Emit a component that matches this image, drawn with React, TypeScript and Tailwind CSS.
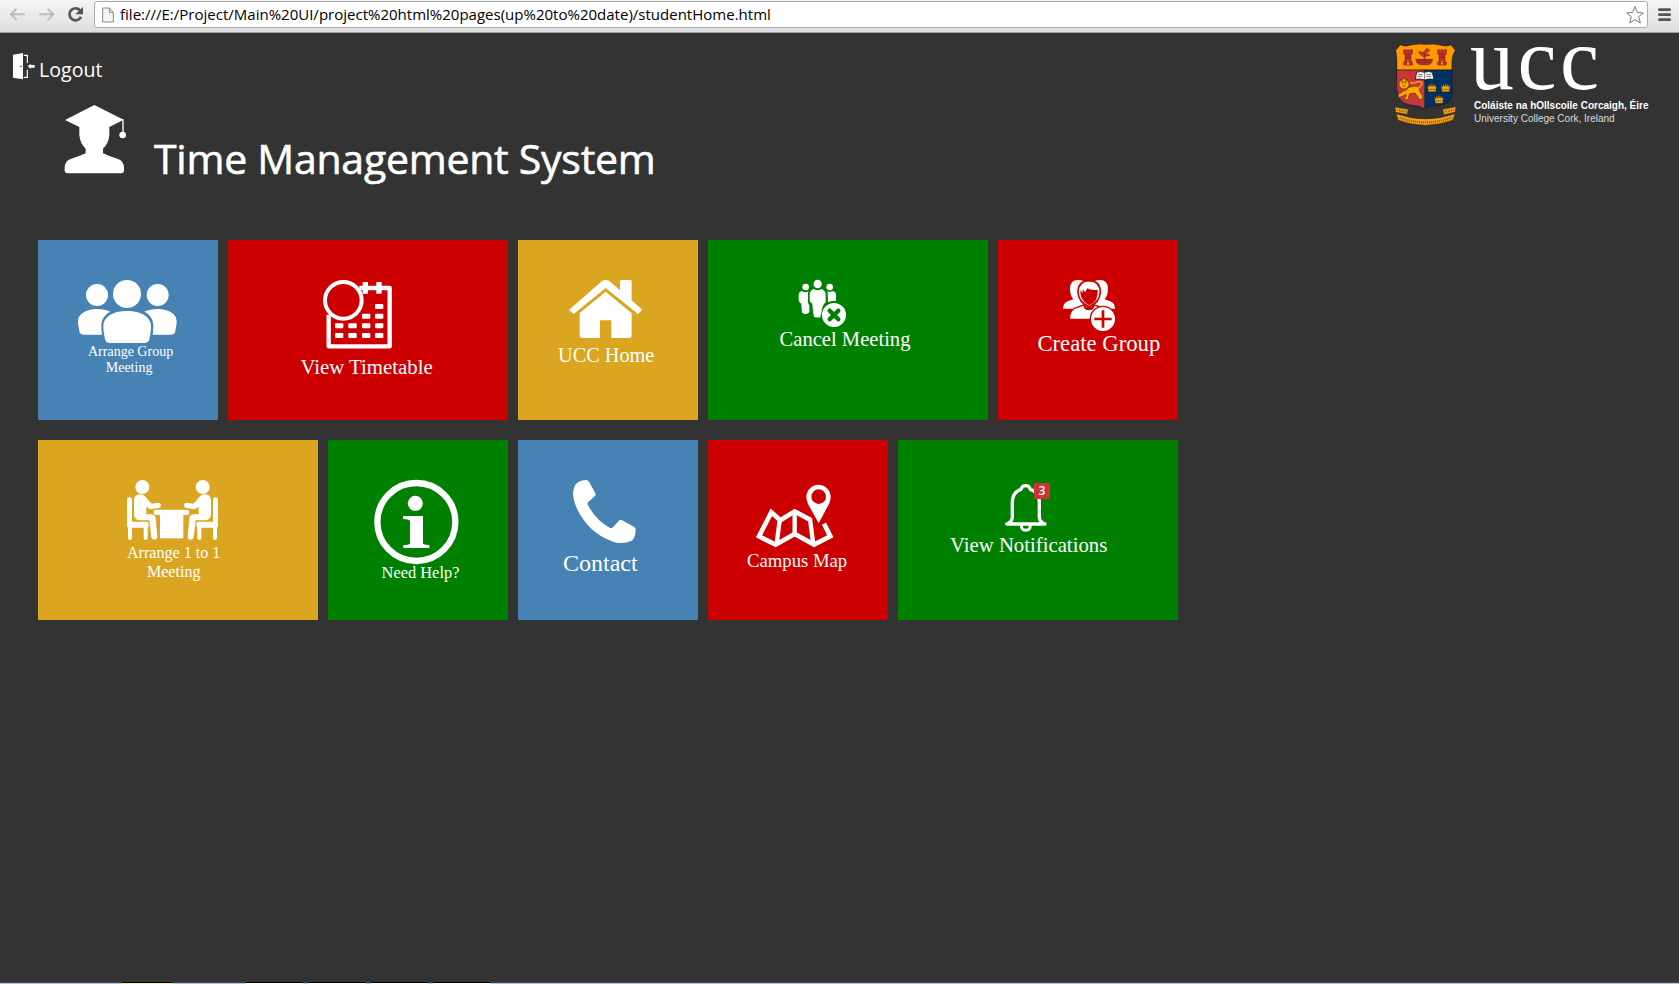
import React from "react";

const serif = "font-['Liberation_Serif',serif]";
const humanist = "font-['Open_Sans',sans-serif]";

type IconProps = { box: string; className: string; children: React.ReactNode };

function Icon({ box, className, children }: IconProps) {
  return (
    <svg viewBox={box} className={`block shrink-0 overflow-visible ${className}`} fill="#fff">
      {children}
    </svg>
  );
}

function Tile({ className, children }: { className: string; children: React.ReactNode }) {
  return (
    <a className={`flex h-[180px] shrink-0 flex-col items-start pt-10 whitespace-nowrap text-white ${serif} ${className}`}>
      {children}
    </a>
  );
}

function BrowserBar() {
  return (
    <div className="flex h-[33px] items-start border-b border-[#a0a0a0] bg-linear-to-b from-[#f6f6f6] to-[#dedede]">
      <svg viewBox="0 0 282 96" className="h-8 w-[94px] shrink-0" fill="none">
        <path d="M75 43H34M50 26L33 43L50 60" stroke="#bcbcbc" strokeWidth="6" />
        <path d="M118 43H159M143 26L160 43L143 60" stroke="#bcbcbc" strokeWidth="6" />
        <path d="M240 31A18 18 0 1 0 243 50" stroke="#555" strokeWidth="8" />
        <path d="M249 20V43H226Z" fill="#555" />
      </svg>
      <div className="mt-px flex h-[27px] flex-1 items-center rounded-[3px] border border-[#adadad] bg-white">
        <svg viewBox="0 0 36 48" className="ml-[7px] h-4 w-3 shrink-0" fill="#f4f4f4" stroke="#8a8a8a" strokeWidth="3">
          <path d="M2 3H22L34 16V45H2Z" />
          <path d="M22 3V16H34" fill="none" />
        </svg>
        <span className={`mb-[2px] ml-[6px] text-[15.03px] leading-6 whitespace-nowrap text-black ${humanist}`}>
          file:///E:/Project/Main%20UI/project%20html%20pages(up%20to%20date)/studentHome.html
        </span>
        <svg viewBox="0 0 54 54" className="mr-[3px] ml-auto size-[18px] shrink-0" fill="#fff" stroke="#777" strokeWidth="3" strokeLinejoin="round">
          <path d="M27 2L34 19L52 21L38 32L43 51L27 41L11 51L16 32L2 21L20 19Z" />
        </svg>
      </div>
      <svg viewBox="0 0 93 96" className="h-8 w-[31px] shrink-0" stroke="#555" strokeWidth="8" strokeLinecap="round">
        <path d="M34 29H65M34 44H65M34 59H65" />
      </svg>
    </div>
  );
}

function Crown({ x, y }: { x: number; y: number }) {
  return (
    <g transform={`translate(${x} ${y})`}>
      <path d="M-14 -8L-9 -1L-7 -12L-3 -2L0 -14L3 -2L7 -12L9 -1L14 -8L11 13H-11Z" fill="#fa0" stroke="#023" strokeWidth="1" />
      <path d="M-10 6H10" stroke="#023" strokeWidth="1.5" />
    </g>
  );
}

function Tower({ x }: { x: number }) {
  return (
    <g transform={`translate(${x} 44)`} stroke="#612" strokeWidth="1.5">
      <path d="M-13 0H-7V5H-3V0H3V5H7V0H13V13H9V37H13V46H-13V37H-9V13H-13Z" fill="#c9302c" />
      <path d="M-4 46V35Q0 29 4 35V46Z" fill="#fa0" />
      <path d="M-9 13H9M-9 24H9M-9 37H9M0 15V24" fill="none" />
    </g>
  );
}

function Crest() {
  return (
    <svg viewBox="48 27 186 246" className="h-[82px] w-[62px] shrink-0">
      <path d="M64 29Q78 37 95 30Q118 25 140 28Q162 25 184 30Q202 37 216 29L229 46Q219 61 219 78V104H54V78Q53 61 50 46Z" fill="#f90" />
      <path d="M54 105H136V222Q124 212 100 211Q71 208 62 190Q52 172 53 140Z" fill="#c9373b" />
      <path d="M137 105H219V145Q222 181 215 193Q204 209 178 211Q150 212 137 222Z" fill="#013065" />
      <path d="M64 29Q78 37 95 30Q118 25 140 28Q162 25 184 30Q202 37 216 29L229 46Q219 61 219 78V145Q222 181 215 193Q204 209 178 211Q150 212 136 222Q124 212 100 211Q71 208 62 190Q52 172 53 140V78Q53 61 50 46Z" fill="none" stroke="#181818" strokeWidth="2" />
      <path d="M53 105H219" stroke="#181818" strokeWidth="2" />
      <Tower x={87} />
      <Tower x={189} />
      <path d="M110 73H161Q158 88 148 89H123Q112 87 110 73Z" fill="#b8342c" stroke="#612" strokeWidth="1.5" />
      <path d="M119 50L134 52L143 40L153 46L140 56L152 60L134 66L122 57Z" fill="#c8382c" stroke="#612" strokeWidth="1.5" />
      <path d="M137 56V74M112 76H160M118 82H154" stroke="#722" strokeWidth="2.5" fill="none" />
      <path d="M113 112Q125 107 136 112Q149 107 160 112L165 133Q150 130 138 135Q124 130 109 133Z" fill="#fff" stroke="#111" strokeWidth="2.5" />
      <path d="M137 112V134M117 118H131M116 124H131M142 118H157M142 124H158" stroke="#333" strokeWidth="2" />
      <g fill="#fa0" stroke="#40220a" strokeWidth="1.5">
        <path d="M88 158Q105 150 121 156L122 169L131 183V193H118V187L108 174L92 176L87 194H74L80 187L82 178L60 188L57 179L73 169Z" />
        <path d="M119 158Q129 152 129 145Q127 137 113 141Q102 147 94 142" fill="none" stroke="#fa0" strokeWidth="4" />
        <circle cx="75" cy="147" r="15" />
        <path d="M65 132L70 137L75 126L80 137L86 132L84 141H67Z" />
        <path d="M69 144H73M77 144H81M70 152Q76 156 80 151M86 160L80 169" fill="none" stroke="#222" />
      </g>
      <Crown x={159} y={157} />
      <Crown x={200} y={157} />
      <Crown x={180} y={192} />
      <g fill="#f5a01a" stroke="#3a2a14" strokeWidth="1.5">
        <path d="M48 216L88 223L84 238L50 232Z" />
        <path d="M191 223L231 215L228 232L194 239Z" />
        <path d="M52 236Q138 268 228 236L222 255Q138 286 57 255Z" />
      </g>
      <g fill="none" stroke="#49310e" strokeWidth="6">
        <path d="M55 225L82 230M197 230L224 225" strokeDasharray="2 3" opacity=".7" />
        <path d="M62 248Q138 276 218 248" strokeDasharray="3 3" opacity=".65" />
      </g>
    </svg>
  );
}

function Header() {
  return (
    <header className="flex h-[207px] justify-between text-white">
      <div className="flex flex-col items-start">
        <a className="mt-5 ml-[13px] flex h-[30px] items-start">
          <Icon box="39 158 66 80" className="h-[26.7px] w-[22px]">
            <path d="M39 163L69 158V237L39 232Z" />
            <circle cx="63" cy="198" r="2.5" fill="#333" />
            <path d="M71 165H82V188M82 208V231H71" fill="none" stroke="#fff" strokeWidth="3.5" />
            <path d="M83 198L92 190V194H104V202H92V206Z" />
          </Icon>
          <span className={`mt-[3px] ml-[4px] text-[19.6px] leading-7 ${humanist}`}>Logout</span>
        </a>
        <div className="ml-16 flex items-start pt-[22px]">
          <Icon box="192 315 189 207" className="h-[69px] w-[63px]">
            <path d="M283 315L371 359L328 381V405Q326 430 309 446V460Q325 468 352 476Q372 482 372 504V511Q372 520 363 520H203Q194 520 194 511V504Q194 482 214 476Q240 468 257 460V446Q240 430 238 405V381L195 360Z" />
            <path d="M369 358V400" stroke="#fff" strokeWidth="4" />
            <circle cx="368" cy="405" r="10" />
          </Icon>
          <h1 className={`mt-[23px] ml-[27px] text-[41px] leading-[60px] tracking-[-0.25px] whitespace-nowrap [-webkit-text-stroke:0.6px_#fff] ${humanist}`}>
            Time Management System
          </h1>
        </div>
      </div>
      <div className="mt-[11px] mr-[30px] flex w-[254px] items-start">
        <Crest />
        <div className="ml-[13px] flex flex-col whitespace-nowrap font-['Liberation_Sans',sans-serif]">
          <span className={`-mt-[10px] text-[88px] leading-[52px] tracking-[3.5px] ${serif}`}>ucc</span>
          <span className="mt-[14px] ml-[4px] text-[10px] leading-3 font-bold">Coláiste na hOllscoile Corcaigh, Éire</span>
          <span className="mt-px ml-[4px] text-[10px] leading-3 text-[#ddd]">University College Cork, Ireland</span>
        </div>
      </div>
    </header>
  );
}

function Seated() {
  return (
    <>
      <circle cx="337" cy="171" r="21" />
      <rect x="291" y="202" width="15" height="90" rx="7" />
      <rect x="291" y="275" width="65" height="18" rx="6" />
      <path d="M294 288H306V323Q306 330 300 330Q294 330 294 323ZM341 288H353V323Q353 330 347 330Q341 330 341 323Z" />
      <path d="M312 210Q313 194 329 193Q341 193 348 202Q357 216 366 221L384 218Q393 218 393 226Q393 233 386 234L363 238Q358 237 349 231V253H364Q375 254 377 264L382 320Q382 329 373 329Q365 329 364 322L358 271H330Q313 270 312 254Z" />
    </>
  );
}

function Tiles() {
  return (
    <main className="flex flex-col gap-5 pl-[38px]">
      <div className="flex gap-[10px]">
        <Tile className="w-[180px] bg-[#4682b4]">
          <Icon box="144 150 297 192" className="ml-10 h-16 w-[99px]">
            <circle cx="201" cy="195" r="33" />
            <circle cx="383" cy="195" r="33" />
            <circle cx="291" cy="192" r="42" />
            <path d="M291 243C335 243 363 262 363 288C363 300 361 315 358 327C356 337 350 339 340 339H243C232 339 227 336 225 327C222 315 220 300 220 288C220 262 247 243 291 243Z" />
            <path id="shoulder" d="M200 237C216 237 231 240 241 245C224 253 214 268 214 288C214 298 215 305 216 314H163C153 314 149 311 148 303C146 292 144 284 144 274C144 252 168 237 200 237Z" />
            <use href="#shoulder" transform="translate(584 0) scale(-1 1)" />
          </Icon>
          <div className="ml-[50px] text-center text-[14px] leading-4">
            <div>Arrange Group</div>
            <div className="pr-[3px]">Meeting</div>
          </div>
        </Tile>

        <Tile className="w-[280px] bg-[#c00]">
          <Icon box="129 150 207 207" className="ml-[95px] size-[69px]">
            <circle cx="190" cy="211" r="55" fill="none" stroke="#fff" strokeWidth="12" />
            <path d="M238 174H329V349H146V254" fill="none" stroke="#fff" strokeWidth="13" strokeLinejoin="round" />
            <path d="M248 156H264V191H248ZM289 156H305V191H289Z" />
            <g>
              <rect x="285" y="222" width="25" height="15" rx="3" />
              <rect x="246" y="251" width="25" height="15" rx="3" />
              <rect x="285" y="251" width="25" height="15" rx="3" />
              <rect x="165" y="280" width="25" height="15" rx="3" />
              <rect x="205" y="280" width="25" height="15" rx="3" />
              <rect x="246" y="280" width="25" height="15" rx="3" />
              <rect x="285" y="280" width="25" height="15" rx="3" />
              <rect x="165" y="309" width="25" height="15" rx="3" />
              <rect x="205" y="309" width="25" height="15" rx="3" />
              <rect x="246" y="309" width="25" height="15" rx="3" />
              <rect x="285" y="309" width="25" height="15" rx="3" />
            </g>
          </Icon>
          <span className="mt-[6px] ml-[72.5px] text-[20.8px] leading-6">View Timetable</span>
        </Tile>

        <Tile className="w-[180px] bg-[#daa520]">
          <Icon box="867 150 220 174" className="ml-[51px] h-[58px] w-[73.3px]">
            <path d="M867 240L965 154Q977 146 989 154L1020 181V154Q1020 150 1024 150H1051Q1055 150 1055 154V211L1087 239L1074 252L977 174L881 252Z" />
            <path d="M977 185L1055 249V317Q1055 324 1048 324H994V271H960V324H906Q899 324 899 317V249Z" />
          </Icon>
          <span className="mt-[5px] ml-10 text-[20.3px] leading-6">UCC Home</span>
        </Tile>

        <Tile className="w-[280px] bg-[#008000]">
          <Icon box="327 150 141 141" className="ml-[91px] size-[47px]">
            <circle cx="347" cy="171" r="10" />
            <circle cx="383" cy="162" r="12.5" />
            <circle cx="419" cy="171" r="10" />
            <path d="M335 183Q341 187 347 187Q352 187 355 183L354 192V212Q354 222 358 226V246Q355 252 346 252Q338 252 336 247L334 222Q327 218 326 210V193Q328 184 335 183Z" />
            <path d="M371 177Q383 185 394 177Q405 180 407 192V217Q396 226 395 245Q393 252 391 262Q383 264 373 261Q370 258 367 222Q359 218 359 210V192Q361 180 371 177Z" />
            <path d="M413 184Q419 188 425 184Q437 183 438 194V213Q425 211 414 217Z" />
            <circle cx="432" cy="255" r="36" />
            <path d="M419 242L445 268M445 242L419 268" stroke="#008000" strokeWidth="13" strokeLinecap="round" />
          </Icon>
          <span className="ml-[71.5px] text-[20.6px] leading-6">Cancel Meeting</span>
        </Tile>

        <Tile className="w-[180px] bg-[#c00]">
          <Icon box="1119 150 156 153" className="ml-[65px] h-[51px] w-[52px]">
            <path d="M1119 236Q1119 220 1133 214L1150 208Q1140 196 1140 175Q1141 150 1164 150Q1174 150 1181 154H1213Q1220 150 1230 150Q1253 150 1254 175Q1254 196 1244 208L1261 214Q1275 220 1275 236Z" />
            <path d="M1139 268Q1137 244 1155 234L1180 225Q1197 247 1214 225L1239 234V268Z" stroke="#c00" strokeWidth="4" />
            <path d="M1164 187Q1164 153 1197 152Q1231 153 1231 187Q1229 217 1197 230Q1166 217 1164 187Z" stroke="#c00" strokeWidth="5" />
            <path d="M1171 190L1172 180L1177 189L1179 178L1185 187L1192 175Q1205 183 1223 179Q1226 215 1197 226Q1174 214 1171 190Z" fill="#c00" />
            <path d="M1181 224Q1197 238 1213 224L1210 237Q1197 245 1184 237Z" fill="#c00" />
            <circle cx="1239" cy="267" r="38" stroke="#c00" strokeWidth="4" />
            <path d="M1213 267H1265M1239 241V293" stroke="#c00" strokeWidth="8" />
          </Icon>
          <span className="mt-px ml-[39.4px] text-[22.7px] leading-6">Create Group</span>
        </Tile>
      </div>

      <div className="flex gap-[10px]">
        <Tile className="w-[280px] bg-[#daa520]">
          <Icon box="291 150 273 180" className="ml-[89px] h-[60px] w-[91px]">
            <Seated />
            <g transform="translate(855 0) scale(-1 1)">
              <Seated />
            </g>
            <rect x="371" y="239" width="107" height="16" rx="7" />
            <rect x="390" y="250" width="70" height="75" />
          </Icon>
          <div className="mt-[3px] ml-[89px] text-center text-[16.1px] leading-[19px]">
            <div>Arrange 1 to 1</div>
            <div>Meeting</div>
          </div>
        </Tile>

        <Tile className="w-[180px] bg-[#008000]">
          <Icon box="162 150 254 252" className="ml-[46px] h-[84px] w-[84.7px]">
            <circle cx="289" cy="276" r="117" fill="none" stroke="#fff" strokeWidth="19" />
            <circle cx="286" cy="220" r="22.5" />
            <path d="M249 258H309V341Q312 344 328 345V354H250V345Q266 345 270 341V272Q266 268 249 267Z" />
          </Icon>
          <span className="-mt-px ml-[53.6px] text-[16.4px] leading-5">Need Help?</span>
        </Tile>

        <Tile className="w-[180px] bg-[#4682b4]">
          <Icon box="760 150 188 190" className="ml-[55.3px] h-[63.3px] w-[62.7px]">
            <path d="M799 150Q805 150 808 155L827 190Q829 195 825 199L805 217Q802 221 805 226Q830 272 870 293Q876 295 880 292L899 271Q903 268 907 271L943 290Q948 293 948 299Q948 323 936 332Q918 341 890 338Q820 318 782 255Q762 222 760 192Q760 165 777 155Q788 150 799 150Z" />
          </Icon>
          <span className="mt-[8px] ml-[45px] text-[24px] leading-6">Contact</span>
        </Tile>

        <Tile className="w-[180px] bg-[#c00]">
          <Icon box="198 150 231 201" className="ml-12 h-[67px] w-[77px]">
            <path fillRule="evenodd" d="M386 280L354 222Q349 211 349 201A36.5 36.5 0 0 1 422 201Q422 211 418 220ZM386 178A22 22 0 1 0 386 222A22 22 0 1 0 386 178Z" />
            <path d="M364 271L314 244L271 271L244 247L207 319L257 344L314 312L372 344L421 319L402 281" fill="none" stroke="#fff" strokeWidth="14" />
            <path d="M269 271L260 342M314 245V314M360 268L370 342" fill="none" stroke="#fff" strokeWidth="13" />
          </Icon>
          <span className="mt-[2px] ml-[39px] text-[18.7px] leading-6">Campus Map</span>
        </Tile>

        <Tile className="w-[280px] bg-[#008000]">
          <div className="relative ml-[107px]">
            <Icon box="945 150 138 156" className="h-[52px] w-[46px]">
              <path d="M950 282H1065Q1048 276 1048 262V215Q1047 186 1021 178Q1018 167 1007 167Q996 167 993 178Q968 186 967 215V262Q967 276 950 282Z" fill="none" stroke="#fff" strokeWidth="10" strokeLinejoin="round" />
              <path d="M994 286Q994 301 1007 301Q1021 301 1021 286" fill="none" stroke="#fff" strokeWidth="9" />
            </Icon>
            <span className={`absolute top-[3px] left-[29px] flex size-4 items-center justify-center bg-[#c33] text-[12px] leading-4 font-semibold ${humanist}`}>3</span>
          </div>
          <span className="mt-px ml-[52px] text-[20.75px] leading-6">View Notifications</span>
        </Tile>
      </div>
    </main>
  );
}

function TaskbarEdge() {
  return (
    <div className="mt-auto flex h-[2px] bg-linear-to-b from-[#3c4650] from-50% to-[#b4c8dc] to-50%">
      <div className="ml-[122px] w-[50px] border-t border-black bg-[#f5f0a0]" />
      <div className="ml-[74px] w-[57px] border-t border-black bg-white" />
      <div className="ml-[5px] w-[58px] border-t border-black bg-white" />
      <div className="ml-[5px] w-[57px] border-t border-black bg-white" />
      <div className="ml-[5px] w-[57px] border-t border-black bg-white" />
    </div>
  );
}

export default function App() {
  return (
    <div className="flex h-[984px] w-[1679px] flex-col overflow-hidden bg-[#333]">
      <BrowserBar />
      <Header />
      <Tiles />
      <TaskbarEdge />
    </div>
  );
}
